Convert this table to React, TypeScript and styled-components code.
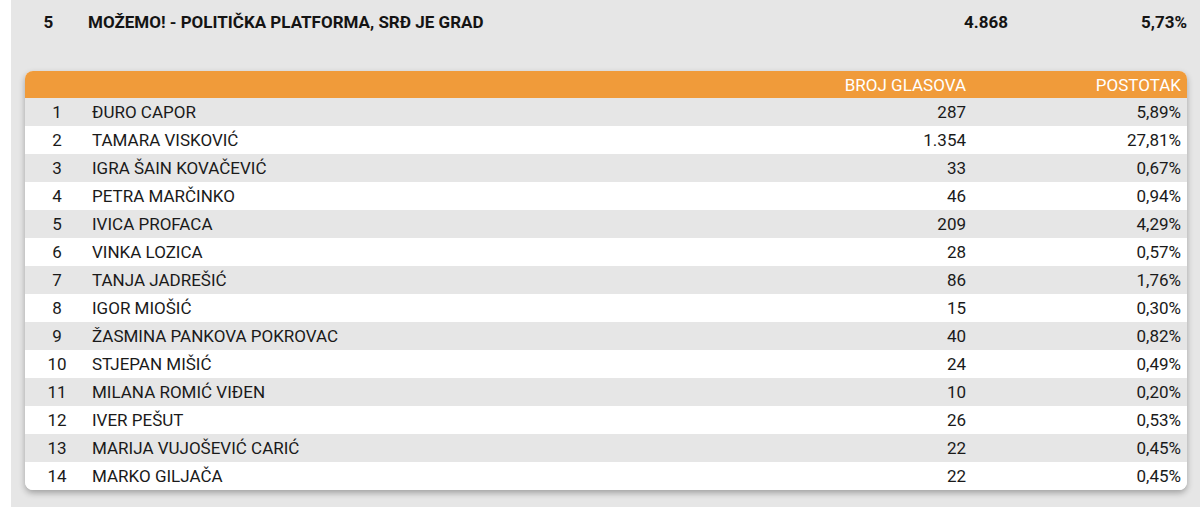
import React from "react";
import styled, { createGlobalStyle } from "styled-components";

const rows = [
	{ name: "ĐURO CAPOR", votes: "287", pct: "5,89%" },
	{ name: "TAMARA VISKOVIĆ", votes: "1.354", pct: "27,81%" },
	{ name: "IGRA ŠAIN KOVAČEVIĆ", votes: "33", pct: "0,67%" },
	{ name: "PETRA MARČINKO", votes: "46", pct: "0,94%" },
	{ name: "IVICA PROFACA", votes: "209", pct: "4,29%" },
	{ name: "VINKA LOZICA", votes: "28", pct: "0,57%" },
	{ name: "TANJA JADREŠIĆ", votes: "86", pct: "1,76%" },
	{ name: "IGOR MIOŠIĆ", votes: "15", pct: "0,30%" },
	{ name: "ŽASMINA PANKOVA POKROVAC", votes: "40", pct: "0,82%" },
	{ name: "STJEPAN MIŠIĆ", votes: "24", pct: "0,49%" },
	{ name: "MILANA ROMIĆ VIĐEN", votes: "10", pct: "0,20%" },
	{ name: "IVER PEŠUT", votes: "26", pct: "0,53%" },
	{ name: "MARIJA VUJOŠEVIĆ CARIĆ", votes: "22", pct: "0,45%" },
	{ name: "MARKO GILJAČA", votes: "22", pct: "0,45%" },
];

export default function App() {
	return (
		<>
			<GlobalStyle />
			<Panel>
				<PartyRow>
					<PartyNo>5</PartyNo>
					<PartyName>MOŽEMO! - POLITIČKA PLATFORMA, SRĐ JE GRAD</PartyName>
					<PartyVotes>4.868</PartyVotes>
					<PartyPct>5,73%</PartyPct>
				</PartyRow>
				<Table>
					<HeadRow>
						<span />
						<span />
						<HeadCell>BROJ GLASOVA</HeadCell>
						<HeadCell>POSTOTAK</HeadCell>
					</HeadRow>
					{rows.map((r, i) => (
						<Row key={i} $striped={i % 2 === 0}>
							<NoCell>{i + 1}</NoCell>
							<NameCell>{r.name}</NameCell>
							<NumCell>{r.votes}</NumCell>
							<NumCell>{r.pct}</NumCell>
						</Row>
					))}
				</Table>
			</Panel>
		</>
	);
}

const GlobalStyle = createGlobalStyle`
	body {
		margin: 0;
		background: #ffffff;
		font-family: Roboto, "Liberation Sans", sans-serif;
		color: #1a1a1a;
	}
`;

const Panel = styled.div`
	margin-left: 11px;
	background: #e6e6e6;
	height: 507px;
	box-sizing: border-box;
	padding: 0 13px 0 14px;
`;

const PartyRow = styled.div`
	display: grid;
	grid-template-columns: 47px 1fr 200px 179px;
	align-items: center;
	height: 44px;
	font-weight: 700;
	font-size: 17px;
	color: #141414;
`;

const PartyNo = styled.div`
	text-align: center;
`;

const PartyName = styled.div`
	padding-left: 16px;
`;

const PartyVotes = styled.div`
	text-align: right;
`;

const PartyPct = styled.div`
	text-align: right;
`;

const Table = styled.div`
	margin-top: 27px;
	width: 1162px;
	border-radius: 8px;
	overflow: hidden;
	background: #ffffff;
	box-shadow: 0 3px 6px rgba(0, 0, 0, 0.3);
`;

const columns = `64px 1fr 200px 215px`;

const HeadRow = styled.div`
	display: grid;
	grid-template-columns: ${columns};
	height: 27px;
	align-items: center;
	background: #f09b3a;
	padding-right: 6px;
`;

const HeadCell = styled.div`
	text-align: right;
	color: #ffffff;
	font-size: 17px;
`;

const Row = styled.div<{ $striped: boolean }>`
	display: grid;
	grid-template-columns: ${columns};
	height: 28px;
	align-items: center;
	padding-right: 6px;
	background: ${(p) => (p.$striped ? "#e6e6e6" : "#ffffff")};
	font-size: 17px;
`;

const NoCell = styled.div`
	text-align: center;
`;

const NameCell = styled.div`
	padding-left: 3px;
`;

const NumCell = styled.div`
	text-align: right;
`;
